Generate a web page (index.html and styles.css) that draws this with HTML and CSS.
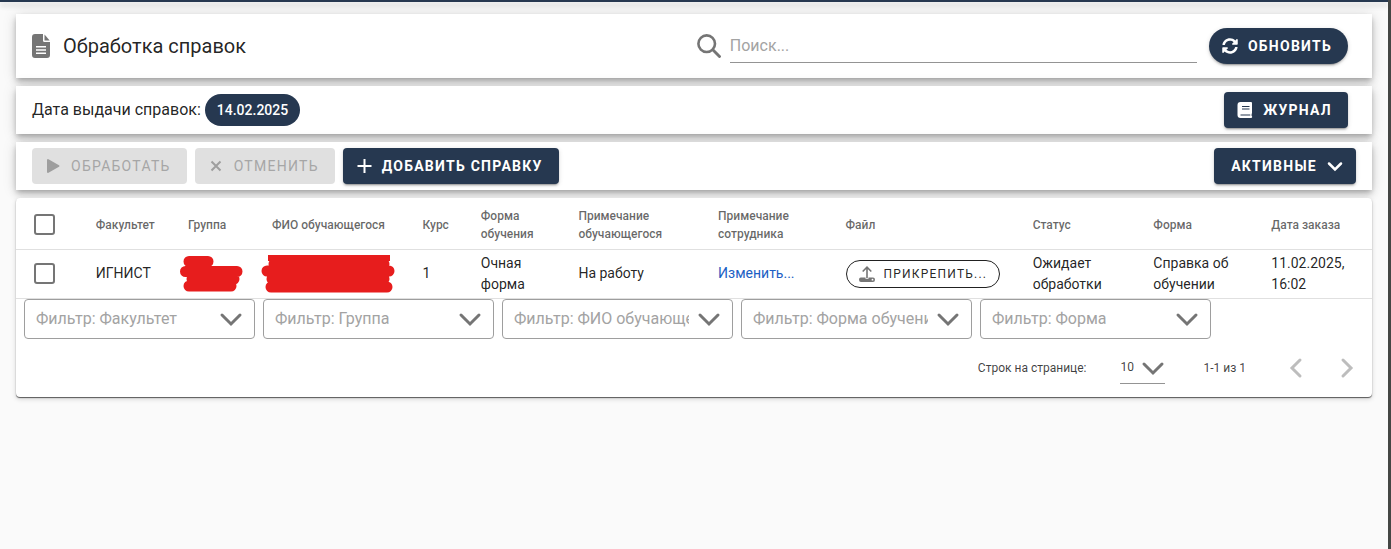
FILE: index.html
```html
<!DOCTYPE html>
<html lang="ru">
<head>
  <meta charset="UTF-8">
  <meta name="viewport" content="width=device-width, initial-scale=1.0">
  <title>Обработка справок</title>
  <link rel="stylesheet" href="styles.css">
</head>
<body>
  <div class="app-bar"></div>

  <main class="content">
    <header class="card title-card">
      <svg class="icon-file" viewBox="0 0 18 24" aria-hidden="true">
        <path d="M3 0h8v6.500q0 1.500 1.500 1.500H18v13q0 3-3 3H3q-3 0-3-3V3Q0 0 3 0z" fill="#757575"/>
        <path d="M12.500 0.500 17.700 6.500H12.500z" fill="#757575"/>
        <path d="M4 12.800h10M4 16h10M4 19.200h10" stroke="#fff" stroke-width="1.500"/>
      </svg>
      <h1 class="title">Обработка справок</h1>
      <label class="search">
        <svg class="icon-search" viewBox="0 0 24 24" aria-hidden="true">
          <circle cx="9.700" cy="9.700" r="8.300" fill="none" stroke="#757575" stroke-width="2.600"/>
          <path d="m15.800 15.800 6.700 6.700" stroke="#757575" stroke-width="2.900" stroke-linecap="round"/>
        </svg>
        <input type="text" class="search-input" placeholder="Поиск..." aria-label="Поиск">
      </label>
      <button type="button" class="btn btn-dark btn-round">
        <svg class="icon-16" viewBox="0 0 512 512" aria-hidden="true">
          <path fill="#fff" d="M370.700 133.300C339.500 104 298.900 88 255.800 88c-77.500.1-144.300 53.200-162.800 126.900-1.300 5.400-6.100 9.100-11.700 9.100H24.100c-7.500 0-13.200-6.800-11.800-14.200C33.900 94.900 134.800 8 256 8c66.400 0 126.800 26.100 171.300 68.700L463 41c15.100-15.100 41-4.400 41 17v134c0 13.300-10.700 24-24 24H345.900c-21.400 0-32.100-25.900-17-41l41.800-41.700zM32 296h134.100c21.400 0 32.100 25.900 17 41l-41.800 41.800c31.300 29.300 71.800 45.300 114.900 45.200 77.400-.1 144.300-53.100 162.800-126.800 1.300-5.400 6.100-9.200 11.700-9.200h57.300c7.500 0 13.200 6.800 11.800 14.200C478.100 417.100 377.200 504 256 504c-66.400 0-126.800-26.100-171.300-68.700L49 471c-15.100 15.100-41 4.400-41-17V320c0-13.300 10.700-24 24-24z"/>
        </svg>
        Обновить
      </button>
    </header>

    <section class="card date-card">
      <span>Дата выдачи справок:</span>
      <button type="button" class="chip">14.02.2025</button>
      <button type="button" class="btn btn-dark push">
        <svg class="icon-16" viewBox="0 0 16 16" aria-hidden="true">
          <path fill="#fff" d="M3.500 0H14q1 0 1 1v10q0 .6-.4.900v2.200q.6.200.6.900t-.9 1H3.500Q.5 16 .5 13V3q0-3 3-3z"/>
          <path d="M5 4.500h7.500M5 7h7.500M3.500 13h9.800" stroke="#263850" stroke-width="1.200"/>
        </svg>
        Журнал
      </button>
    </section>

    <section class="card actions-card">
      <button type="button" class="btn" disabled>
        <svg class="icon-16" viewBox="0 0 16 16" aria-hidden="true">
          <path d="M3 2v12L13.500 8z" fill="#9e9e9e" stroke="#9e9e9e" stroke-width="2" stroke-linejoin="round"/>
        </svg>
        Обработать
      </button>
      <button type="button" class="btn" disabled>
        <svg class="icon-16" viewBox="0 0 16 16" aria-hidden="true">
          <path d="m3.500 3.500 9 9m0-9-9 9" stroke="#9e9e9e" stroke-width="2"/>
        </svg>
        Отменить
      </button>
      <button type="button" class="btn btn-dark">
        <svg class="icon-16" viewBox="0 0 16 16" aria-hidden="true">
          <path d="M8.500 1v14M1.500 8h14" stroke="#fff" stroke-width="2"/>
        </svg>
        Добавить справку
      </button>
      <button type="button" class="btn btn-dark btn-menu push">
        Активные
        <svg class="icon-16" viewBox="0 0 16 16" aria-hidden="true">
          <path d="m2 5.500 6 6 6-6" fill="none" stroke="#fff" stroke-width="2.500" stroke-linecap="round"/>
        </svg>
      </button>
    </section>

    <section class="card table-card">
      <table class="requests">
        <colgroup>
          <col class="w-check"><col class="w-faculty"><col class="w-group"><col class="w-name">
          <col class="w-year"><col class="w-study"><col class="w-note"><col class="w-staff">
          <col class="w-file"><col class="w-status"><col class="w-form"><col class="w-date">
        </colgroup>
        <thead>
          <tr>
            <th><input type="checkbox" class="check" aria-label="Выбрать все"></th>
            <th>Факультет</th>
            <th>Группа</th>
            <th>ФИО обучающегося</th>
            <th>Курс</th>
            <th>Форма обучения</th>
            <th>Примечание обучающегося</th>
            <th>Примечание сотрудника</th>
            <th>Файл</th>
            <th>Статус</th>
            <th>Форма</th>
            <th>Дата заказа</th>
          </tr>
        </thead>
        <tbody>
          <tr>
            <td><input type="checkbox" class="check" aria-label="Выбрать строку"></td>
            <td>ИГНИСТ</td>
            <td class="hidden-cell">
              <svg class="mask-group" viewBox="0 0 64 36" aria-hidden="true">
                <path d="M9 5.500h19M5.500 15.500H57M12 23h42M9 30h42" fill="none" stroke="#e71d1d" stroke-width="11" stroke-linecap="round"/>
              </svg>
            </td>
            <td class="hidden-cell">
              <svg class="mask-name" viewBox="0 0 134 38" aria-hidden="true">
                <path d="M7 0h122v6H7z" fill="#e71d1d"/>
                <path d="M13 9h110M6 16h122M11 24h112M10 32h116" fill="none" stroke="#e71d1d" stroke-width="11" stroke-linecap="round"/>
              </svg>
            </td>
            <td>1</td>
            <td>Очная форма</td>
            <td>На работу</td>
            <td><a href="#" class="edit-link">Изменить...</a></td>
            <td>
              <button type="button" class="btn-attach">
                <svg class="icon-16" viewBox="0 0 16 16" aria-hidden="true">
                  <path d="M8 12V1.500M3.700 5.500 8 1.200l4.300 4.300" fill="none" stroke="#757575" stroke-width="1.600"/>
                  <path d="M2 11.500h4.500v1.300h3v-1.300H14q2 0 2 2.200T14 16H2q-2 0-2-2.300t2-2.200z" fill="#757575"/>
                  <circle cx="13.500" cy="13.700" r="0.900" fill="#fff"/>
                </svg>
                Прикрепить...
              </button>
            </td>
            <td>Ожидает обработки</td>
            <td>Справка об обучении</td>
            <td>11.02.2025, 16:02</td>
          </tr>
        </tbody>
      </table>

      <div class="filters">
        <div class="filter">
          <select aria-label="Факультет"><option>Фильтр: Факультет</option></select>
          <svg class="icon-24" viewBox="0 0 24 24" aria-hidden="true"><path d="m3 8 9 9 9-9"/></svg>
        </div>
        <div class="filter">
          <select aria-label="Группа"><option>Фильтр: Группа</option></select>
          <svg class="icon-24" viewBox="0 0 24 24" aria-hidden="true"><path d="m3 8 9 9 9-9"/></svg>
        </div>
        <div class="filter">
          <select aria-label="ФИО обучающегося"><option>Фильтр: ФИО обучающегося</option></select>
          <svg class="icon-24" viewBox="0 0 24 24" aria-hidden="true"><path d="m3 8 9 9 9-9"/></svg>
        </div>
        <div class="filter">
          <select aria-label="Форма обучения"><option>Фильтр: Форма обучения</option></select>
          <svg class="icon-24" viewBox="0 0 24 24" aria-hidden="true"><path d="m3 8 9 9 9-9"/></svg>
        </div>
        <div class="filter">
          <select aria-label="Форма"><option>Фильтр: Форма</option></select>
          <svg class="icon-24" viewBox="0 0 24 24" aria-hidden="true"><path d="m3 8 9 9 9-9"/></svg>
        </div>
      </div>

      <footer class="pager">
        <label for="per-page">Строк на странице:</label>
        <div class="per-page">
          <select id="per-page"><option>10</option></select>
          <svg class="icon-24" viewBox="0 0 24 24" aria-hidden="true"><path d="m3 8 9 9 9-9"/></svg>
        </div>
        <span class="range">1-1 из 1</span>
        <button type="button" class="page-btn" aria-label="Назад" disabled>
          <svg class="icon-24" viewBox="0 0 24 24" aria-hidden="true"><path d="m16 4-8 8 8 8"/></svg>
        </button>
        <button type="button" class="page-btn" aria-label="Вперёд" disabled>
          <svg class="icon-24" viewBox="0 0 24 24" aria-hidden="true"><path d="m8 4 8 8-8 8"/></svg>
        </button>
      </footer>
    </section>
  </main>
</body>
</html>
```
FILE: styles.css
```css
* {
  box-sizing: border-box;
}

body {
  margin: 0;
  min-height: 100vh;
  border-right: 3px solid #444644;
  background: #fafafa;
  color: rgba(0, 0, 0, 0.87);
  font-family: Roboto, "Liberation Sans", sans-serif;
  font-size: 16px;
  line-height: 24px;
}

button, input, select {
  font-family: inherit;
}

svg {
  display: block;
  flex-shrink: 0;
}

.app-bar {
  height: 2px;
  background: #263850;
  box-shadow: 0 2px 4px -1px rgba(0, 0, 0, 0.2), 0 4px 5px 0 rgba(0, 0, 0, 0.14), 0 1px 10px 0 rgba(0, 0, 0, 0.12);
}

.content {
  display: flex;
  flex-direction: column;
  gap: 8px;
  padding: 12px 16px;
}

.card {
  display: flex;
  align-items: center;
  background: #fff;
  box-shadow: 0 3px 5px -1px rgba(0, 0, 0, 0.2), 0 5px 8px 0 rgba(0, 0, 0, 0.14), 0 1px 14px 0 rgba(0, 0, 0, 0.12);
}

/* заголовок и поиск */
.title-card {
  height: 64px;
  padding: 0 24px 0 16px;
}

.icon-file {
  width: 18px;
  height: 24px;
}

.title {
  flex: 1;
  margin: 0 0 0 13px;
  font-size: 20px;
  font-weight: 400;
}

.search {
  display: flex;
  align-items: center;
  gap: 9px;
  width: 38%;
  margin-right: 12px;
}

.icon-search {
  width: 24px;
  height: 24px;
}

.search-input {
  flex: 1;
  min-width: 0;
  height: 34px;
  padding: 0;
  border: 0;
  border-bottom: 1px solid #949494;
  background: none;
  font-size: 16px;
  outline: none;
}

.search-input::placeholder {
  color: #a3a3a3;
}

/* кнопки */
.btn {
  display: flex;
  align-items: center;
  gap: 10px;
  height: 36px;
  padding: 0 16px 0 13px;
  border: 0;
  border-radius: 4px;
  background: #e0e0e0;
  color: #a6a6a6;
  font-size: 14px;
  font-weight: 400;
  letter-spacing: 0.09em;
  text-transform: uppercase;
  white-space: nowrap;
}

.btn-dark {
  background: #263850;
  color: #fff;
  font-weight: 700;
  box-shadow: 0 3px 1px -2px rgba(0, 0, 0, 0.2), 0 2px 2px 0 rgba(0, 0, 0, 0.14), 0 1px 5px 0 rgba(0, 0, 0, 0.12);
}

.btn-round {
  border-radius: 18px;
}

.btn-menu {
  padding: 0 13px 0 17px;
}

.push {
  margin-left: auto;
}

.icon-16 {
  width: 16px;
  height: 16px;
}

.icon-24 {
  width: 24px;
  height: 24px;
}

.icon-24 path {
  fill: none;
  stroke: #757575;
  stroke-width: 3;
  stroke-linecap: round;
}

.date-card {
  gap: 4px;
  height: 48px;
  padding: 0 24px 0 16px;
}

.chip {
  height: 32px;
  padding: 0 12px;
  border: 0;
  border-radius: 16px;
  background: #263850;
  color: #fff;
  font-size: 14px;
  font-weight: 500;
}

.actions-card {
  gap: 8px;
  height: 48px;
  padding: 0 16px;
}

/* таблица */
.table-card {
  display: block;
  padding-top: 3px;
  border-radius: 4px;
  box-shadow: 0 1px 1px rgba(0, 0, 0, 0.6), 0 2px 5px rgba(0, 0, 0, 0.16);
}

.requests {
  width: 100%;
  table-layout: fixed;
  border-collapse: collapse;
}

.w-check { width: 4.7%; }
.w-faculty { width: 6.8%; }
.w-group { width: 6.2%; }
.w-name { width: 11.1%; }
.w-year { width: 4.3%; }
.w-study { width: 7.2%; }
.w-note { width: 10.3%; }
.w-staff { width: 9.4%; }
.w-file { width: 13.8%; }
.w-status { width: 8.9%; }
.w-form { width: 8.7%; }
.w-date { width: 8.6%; }

.requests th,
.requests td {
  height: 48px;
  padding: 0 16px;
  border-bottom: 1px solid #e0e0e0;
  text-align: left;
  vertical-align: middle;
}

.requests th {
  color: rgba(0, 0, 0, 0.6);
  font-size: 12px;
  font-weight: 500;
  line-height: 18px;
}

.requests td {
  padding: 3px 16px;
  font-size: 14px;
  line-height: 21px;
}

.requests th:nth-child(4),
.requests th:last-child {
  white-space: nowrap;
}

.check {
  display: block;
  appearance: none;
  width: 21px;
  height: 21px;
  margin: 0 0 0 2px;
  border: 2px solid #757575;
  border-radius: 3px;
}

.requests .hidden-cell {
  padding: 0 5px;
}

.mask-group {
  width: 64px;
  height: 36px;
  margin-left: 3px;
}

.mask-name {
  width: 134px;
  height: 38px;
}

.edit-link {
  color: #1d60c4;
  text-decoration: none;
}

.btn-attach {
  display: flex;
  align-items: center;
  gap: 9px;
  height: 28px;
  padding: 0 12px;
  border: 1px solid #212121;
  border-radius: 14px;
  background: none;
  color: rgba(0, 0, 0, 0.87);
  font-size: 12px;
  letter-spacing: 0.1em;
  text-transform: uppercase;
  white-space: nowrap;
}

/* фильтры под таблицей */
.filters {
  display: flex;
  gap: 8px;
  padding: 0 8px;
}

.filter {
  display: grid;
  align-items: center;
  width: 231px;
}

.filter select,
.filter svg,
.per-page select,
.per-page svg {
  grid-area: 1 / 1;
}

.filter svg,
.per-page svg {
  justify-self: end;
  pointer-events: none;
}

.filter svg {
  margin-right: 12px;
}

.filter select {
  appearance: none;
  width: 100%;
  height: 40px;
  padding: 0 43px 0 11px;
  border: 1px solid #9e9e9e;
  border-radius: 4px;
  background: none;
  color: #a3a3a3;
  font-size: 16px;
}

.pager {
  display: flex;
  align-items: center;
  justify-content: flex-end;
  height: 58px;
  padding-right: 7px;
  color: rgba(0, 0, 0, 0.75);
  font-size: 12px;
}

.per-page {
  display: grid;
  align-items: center;
  width: 45px;
  margin: 0 38px 0 34px;
}

.per-page select {
  appearance: none;
  width: 100%;
  height: 32px;
  padding: 0;
  border: 0;
  border-bottom: 1px solid #949494;
  background: none;
  color: inherit;
  font-size: 12px;
}

.range {
  margin-right: 32px;
}

.page-btn {
  display: flex;
  align-items: center;
  justify-content: center;
  width: 36px;
  height: 36px;
  padding: 0;
  border: 0;
  background: none;
}

.page-btn + .page-btn {
  margin-left: 15px;
}

.page-btn path {
  stroke: #bdbdbd;
}
```
